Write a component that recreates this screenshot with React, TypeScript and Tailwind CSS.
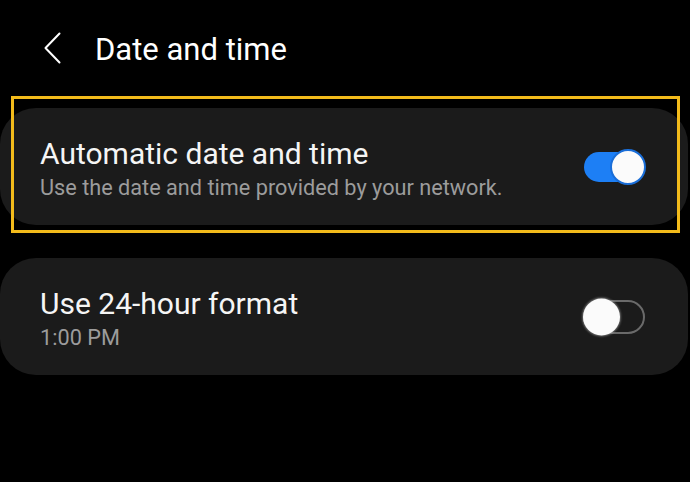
function Toggle({ on }: { on: boolean }) {
  if (on) {
    return (
      <div className="relative w-[61px] h-[30px] rounded-full bg-[#1d7ff5] shrink-0">
        <div className="absolute right-[-1px] top-1/2 -translate-y-1/2 w-[36px] h-[36px] rounded-full bg-[#fbfbfb] border-[2px] border-[#1a6ed8]" />
      </div>
    );
  }
  return (
    <div className="relative w-[62px] h-[34px] rounded-full border-2 border-[#6a6a6a] shrink-0">
      <div className="absolute left-[-2px] top-1/2 -translate-y-1/2 w-[37px] h-[37px] rounded-full bg-[#fbfbfb] shadow-[0_0_2px_1px_rgba(160,160,160,0.6)]" />
    </div>
  );
}

function SettingRow({ title, subtitle, on }: { title: string; subtitle: string; on: boolean }) {
  return (
    <div className="w-[688px] h-[117px] rounded-[36px] bg-[#1b1b1b] flex items-center justify-between pl-[40px] pr-[43px]">
      <div className="pt-[5px] flex flex-col gap-[2px]">
        <span className="text-[30px] leading-[36px] text-[#f5f5f5]">{title}</span>
        <span className="text-[21.7px] leading-[28px] text-[#9c9c9c]">{subtitle}</span>
      </div>
      <Toggle on={on} />
    </div>
  );
}

export default function App() {
  return (
    <div className="relative w-[690px] h-[482px] bg-black overflow-hidden font-['Roboto',sans-serif]">
      <header className="flex items-center h-[40px] mt-[30px] pl-[43px]">
        <svg width="19" height="32" viewBox="0 0 19 32" fill="none" className="mt-[-4px]">
          <path d="M16.5 1.5 2.5 16l14 14.5" stroke="white" strokeWidth="2" strokeLinecap="round" strokeLinejoin="round" />
        </svg>
        <h1 className="ml-[33px] text-[31px] leading-[40px] text-white">Date and time</h1>
      </header>

      <div className="mt-[38px] flex flex-col gap-[33px]">
        <SettingRow title="Automatic date and time" subtitle="Use the date and time provided by your network." on />
        <SettingRow title="Use 24-hour format" subtitle="1:00 PM" on={false} />
      </div>

      <div className="absolute left-[11px] top-[96px] w-[669px] h-[137px] border-[3px] border-[#f3bb1b]" />
    </div>
  );
}
